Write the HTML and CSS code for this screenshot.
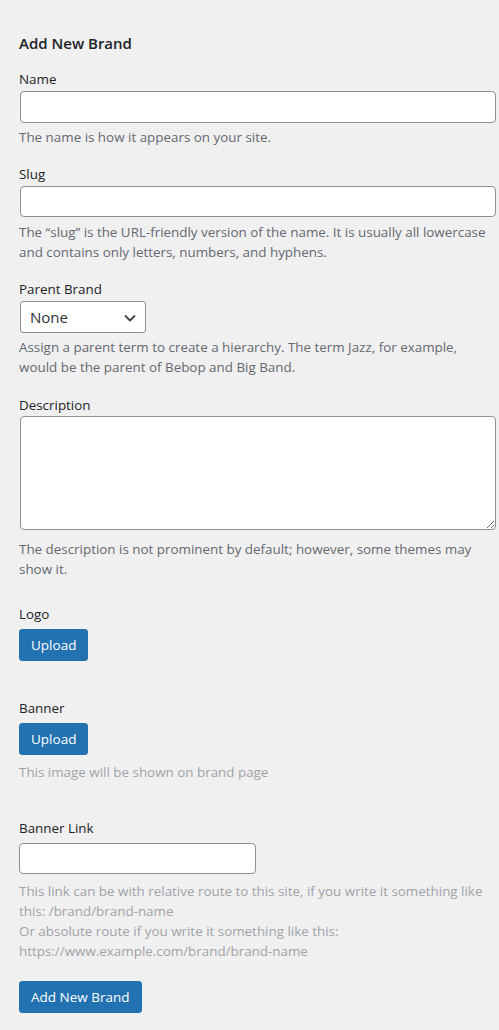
FILE: index.html
```html
<!DOCTYPE html>
<html lang="en">
<head>
<meta charset="utf-8">
<title>Add New Brand</title>
<link rel="stylesheet" href="styles.css">
</head>
<body>
<div class="wrap">
  <h2 class="title">Add New Brand</h2>
  <form class="form">
    <div class="field f-name">
      <label class="label" for="tag-name">Name</label>
      <input class="text" type="text" id="tag-name">
      <p class="desc">The name is how it appears on your site.</p>
    </div>
    <div class="field f-slug">
      <label class="label" for="tag-slug">Slug</label>
      <input class="text" type="text" id="tag-slug">
      <p class="desc">The “slug” is the URL-friendly version of the name. It is usually all lowercase and contains only letters, numbers, and hyphens.</p>
    </div>
    <div class="field f-parent">
      <label class="label" for="parent">Parent Brand</label>
      <div class="select-wrap">
        <select class="select" id="parent"><option>None</option></select>
        <svg class="chev" width="14" height="14" viewBox="0 0 14 14" aria-hidden="true"><path d="M2.5 5 L7 9.5 L11.5 5" fill="none" stroke="#3c434a" stroke-width="1.8" stroke-linecap="round" stroke-linejoin="round"/></svg>
      </div>
      <p class="desc">Assign a parent term to create a hierarchy. The term Jazz, for example, would be the parent of Bebop and Big Band.</p>
    </div>
    <div class="field f-descr">
      <label class="label" for="tag-description">Description</label>
      <textarea class="area" id="tag-description"></textarea>
      <p class="desc">The description is not prominent by default; however, some themes may show it.</p>
    </div>
    <div class="field f-logo">
      <label class="label">Logo</label>
      <button type="button" class="btn">Upload</button>
    </div>
    <div class="field f-banner">
      <label class="label">Banner</label>
      <button type="button" class="btn">Upload</button>
      <p class="desc light">This image will be shown on brand page</p>
    </div>
    <div class="field f-link">
      <label class="label" for="banner-link">Banner Link</label>
      <input class="text short" type="text" id="banner-link">
      <p class="desc light">This link can be with relative route to this site, if you write it something like this: /brand/brand-name<br>Or absolute route if you write it something like this: https://www.example.com/brand/brand-name</p>
    </div>
    <div class="submit">
      <button type="submit" class="btn">Add New Brand</button>
    </div>
  </form>
</div>
</body>
</html>
```

FILE: styles.css
```css
* { box-sizing: border-box; }
html, body { margin: 0; padding: 0; }
body {
  background: #f0f0f1;
  font-family: "Open Sans", "Noto Sans", sans-serif;
  font-size: 13.4px;
  line-height: 20px;
  color: #1d2327;
}
.wrap {
  padding: 33px 4px 0 19px;
  width: 499px;
}
.title {
  margin: 0;
  font-size: 15px;
  font-weight: 600;
  line-height: 20px;
  color: #1d2327;
}
.form { display: flex; flex-direction: column; }
.field { display: flex; flex-direction: column; align-items: flex-start; }
.label { display: block; line-height: 20px; color: #1d2327; }
.desc { margin: 0; color: #646970; line-height: 20px; }
.desc.light { color: #a0a3a7; }

.text {
  display: block;
  width: 476px;
  height: 32px;
  margin: 2px 0 0 1px;
  background: #fff;
  border: 1px solid #8c8f94;
  border-radius: 4px;
  font: inherit;
  padding: 0 8px;
}
.text.short { width: 237px; height: 31px; margin-top: 5px; margin-left: 0; }

.f-name { margin-top: 16px; }
.f-name .desc { margin-top: 4px; }
.f-slug { margin-top: 17px; }
.f-slug .text { height: 31px; }
.f-slug .desc { margin-top: 5px; }
.f-parent { margin-top: 17px; }
.f-parent .desc { margin-top: 4px; }

.select-wrap { position: relative; margin-top: 2px; margin-left: 1px; }
.select {
  display: block;
  width: 126px;
  height: 32px;
  appearance: none;
  -webkit-appearance: none;
  background: #fff;
  border: 1px solid #8c8f94;
  border-radius: 3px;
  font-family: inherit;
  font-size: 15px;
  color: #2c3338;
  padding: 0 24px 0 9px;
}
.chev { position: absolute; right: 9px; top: 10px; }

.f-descr { margin-top: 18px; }
.area {
  display: block;
  width: 476px;
  height: 114px;
  margin: 1px 0 0 1px;
  background: #fff;
  border: 1px solid #8c8f94;
  border-radius: 4px;
  font: inherit;
}
.f-descr .desc { margin-top: 9px; }

.f-logo { margin-top: 25px; }
.btn {
  display: inline-block;
  height: 32px;
  padding: 0 11px;
  background: #2271b1;
  border: 1px solid #2271b1;
  border-radius: 3px;
  color: #fff;
  font-family: inherit;
  font-size: 13.5px;
  line-height: 30px;
  cursor: pointer;
}
.f-logo .btn, .f-banner .btn { margin-top: 5px; }
.f-banner { margin-top: 37px; }
.f-banner .desc { margin-top: 7px; }
.f-link { margin-top: 36px; }
.f-link .desc { margin-top: 7px; }
.submit { margin-top: 20px; }
```
